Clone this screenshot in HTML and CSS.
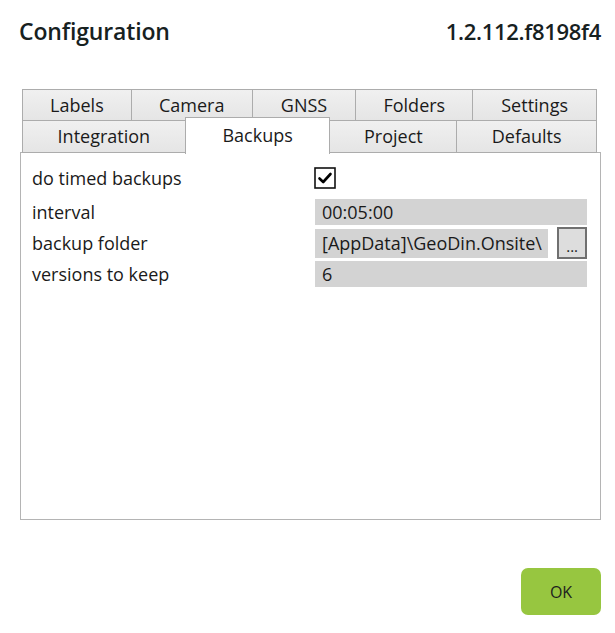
FILE: index.html
```html
<!DOCTYPE html>
<html>
<head>
<meta charset="utf-8">
<link rel="stylesheet" href="styles.css">
</head>
<body>
<div class="dialog">
  <header class="header">
    <h1 class="title">Configuration</h1>
    <div class="version">1.2.112.f8198f4</div>
  </header>
  <div class="tabs">
    <div class="tab-row row-top">
      <div class="tab t-labels">Labels</div>
      <div class="tab t-camera">Camera</div>
      <div class="tab t-gnss">GNSS</div>
      <div class="tab t-folders">Folders</div>
      <div class="tab t-settings">Settings</div>
    </div>
    <div class="tab-row row-bottom">
      <div class="tab t-integration">Integration</div>
      <div class="tab t-backups selected">Backups</div>
      <div class="tab t-project">Project</div>
      <div class="tab t-defaults">Defaults</div>
    </div>
  </div>
  <section class="panel">
    <div class="form">
      <div class="label row-check">do timed backups</div>
      <div class="value row-check">
        <span class="checkbox">
          <svg width="22" height="22" viewBox="0 0 22 22">
            <rect x="1" y="1" width="20" height="20" fill="#fff" stroke="#111" stroke-width="1.6"/>
            <path d="M5.5 11.5 L9.2 15 L16.5 7" fill="none" stroke="#000" stroke-width="2.6" stroke-linecap="round" stroke-linejoin="round"/>
          </svg>
        </span>
      </div>
      <div class="label row-field">interval</div>
      <div class="value row-field"><div class="field">00:05:00</div></div>
      <div class="label row-folder">backup folder</div>
      <div class="value row-folder">
        <div class="field field-short">[AppData]\GeoDin.Onsite\</div>
        <div class="browse">...</div>
      </div>
      <div class="label row-field">versions to keep</div>
      <div class="value row-field"><div class="field">6</div></div>
    </div>
  </section>
  <footer class="footer">
    <button class="ok">OK</button>
  </footer>
</div>
</body>
</html>
```

FILE: styles.css
```css
* { box-sizing: border-box; }
html, body { margin: 0; padding: 0; background: #fff; }
body {
  font-family: "Open Sans", "Noto Sans", sans-serif;
  color: #1a1a1a;
  width: 615px;
  height: 633px;
  overflow: hidden;
}
.header {
  display: flex;
  justify-content: space-between;
  align-items: center;
  height: 62px;
  padding: 0 14px 0 19px;
}
.title {
  margin: 0;
  font-size: 23px;
  font-weight: 600;
  color: #17211f;
  letter-spacing: -0.15px;
}
.version {
  font-size: 22px;
  font-weight: 600;
  color: #17211f;
  letter-spacing: -0.3px;
}
.tabs {
  margin-top: 27px;
  margin-left: 22px;
  width: 575px;
  position: relative;
  z-index: 1;
}
.tab-row { display: flex; }
.tab {
  height: 32px;
  border: 1px solid #acacac;
  background: linear-gradient(#f0f0f0, #e5e5e5);
  font-size: 18px;
  line-height: 31px;
  text-align: center;
  margin-left: -1px;
  white-space: nowrap;
}
.tab:first-child { margin-left: 0; }
.row-bottom { margin-top: -1px; }
.row-bottom .tab { height: 33px; }
.t-labels { width: 110px; }
.t-camera { width: 122px; }
.t-gnss { width: 105px; }
.t-folders { width: 118px; }
.t-settings { width: 125px; }
.t-integration { width: 164px; }
.t-backups { width: 146px; }
.t-project { width: 128px; }
.t-defaults { width: 141px; }
.tab.selected {
  background: #fff;
  border-bottom: none;
  margin-top: -3px;
  height: 37px;
  padding-top: 2px;
  line-height: 31px;
  position: relative;
  z-index: 2;
  margin-bottom: -1px;
}
.panel {
  margin-left: 20px;
  margin-top: -1px;
  width: 581px;
  height: 368px;
  border: 1px solid #b4b4b4;
  background: #fff;
  padding: 0 11px 0 11px;
}
.form {
  display: grid;
  grid-template-columns: 283px 272px;
  grid-template-rows: 30px 26px 32px 26px;
  row-gap: 2px;
  padding-top: 14px;
  font-size: 18px;
}
.label, .value {
  display: flex;
  align-items: center;
}
.row-check { padding-bottom: 8px; }
.checkbox { display: block; width: 22px; height: 22px; margin-left: -1px; }
.checkbox svg { display: block; }
.field {
  width: 272px;
  height: 26px;
  background: #d3d3d3;
  padding-left: 7px;
  line-height: 26px;
  white-space: nowrap;
  overflow: hidden;
}
.row-folder .field-short {
  width: 236px;
  height: 29px;
  line-height: 29px;
}
.browse {
  margin-left: 9px;
  width: 30px;
  height: 32px;
  background: #dddddd;
  border: 2px solid #707070;
  font-size: 15px;
  text-align: center;
  line-height: 34px;
}
.footer {
  display: flex;
  justify-content: flex-end;
  padding-right: 14px;
  margin-top: 48px;
}
.ok {
  width: 80px;
  height: 47px;
  border: none;
  border-radius: 7px;
  background: #97c640;
  font-family: "Open Sans", sans-serif;
  font-size: 16px;
  color: #1e1e1e;
  font-weight: 500;
}
```
